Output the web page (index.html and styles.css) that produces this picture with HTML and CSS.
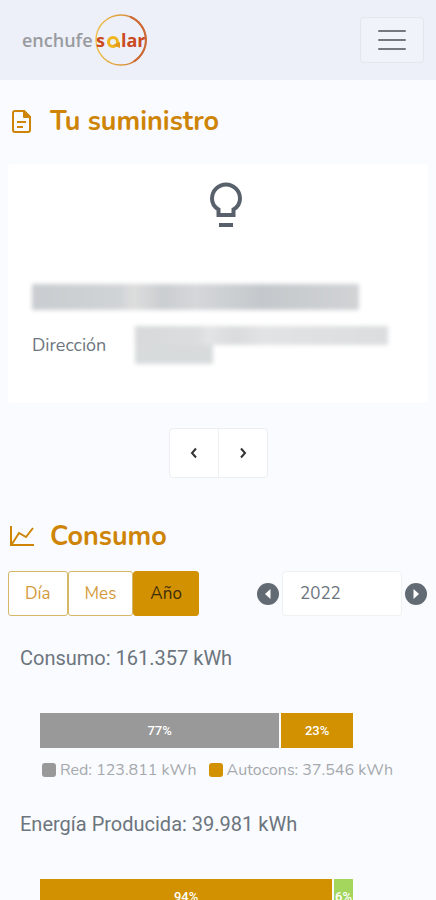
FILE: index.html
```
<!DOCTYPE html>
<html lang="es">
<head>
  <meta charset="UTF-8" />
  <meta name="viewport" content="width=device-width, initial-scale=1.0"/>
  <title>Enchufe Solar</title>
  <link rel="stylesheet" href="styles.css">
</head>
<body>

<!-- Navbar -->
<nav class="navbar">
  <a class="logo" href="#" aria-label="enchufesolar">
    <svg width="128" height="56" viewBox="0 0 128 56">
      <defs>
        <linearGradient id="ring" x1="0" y1="0" x2="1" y2="0">
          <stop offset="0" stop-color="#efc04c"/>
          <stop offset="0.55" stop-color="#dc9a3c"/>
          <stop offset="1" stop-color="#c94b22"/>
        </linearGradient>
      </defs>
      <circle cx="99" cy="28" r="25" fill="none" stroke="url(#ring)" stroke-width="1.4"/>
      <path d="M108 4.800A25 25 0 0 1 112 49.300" fill="none" stroke="#cc6a35" stroke-width="2"/>
      <text class="logo-grey" x="0" y="35">enchufe</text>
      <text class="logo-red" x="74" y="35">s</text>
      <circle cx="91" cy="30" r="4.500" fill="none" stroke="#f0b51c" stroke-width="3"/>
      <path d="M91 33l7 3v-6z" fill="#e39a1b"/>
      <text class="logo-red" x="99" y="35">lar</text>
    </svg>
  </a>
  <button class="menu-btn" type="button" aria-label="Menú">
    <svg width="30" height="24" viewBox="0 0 30 24" fill="none" stroke="#74797d" stroke-width="2" stroke-linecap="round">
      <path d="M2 3h26M2 12h26M2 21h26"/>
    </svg>
  </button>
</nav>

<main class="container">
  <!-- Suministro -->
  <h2 class="title">
    <svg class="title-icon" viewBox="0 0 28 28" fill="none" stroke="currentColor" stroke-width="2" stroke-linejoin="round">
      <path d="M7 3h9l6 6v13a2 2 0 0 1-2 2H7a2 2 0 0 1-2-2V5a2 2 0 0 1 2-2z"/>
      <path d="M16 3v6h6z" fill="currentColor"/>
      <path d="M9 14h9M9 19h6"/>
    </svg>
    Tu suministro
  </h2>

  <section class="card">
    <svg class="bulb" width="56" height="56" viewBox="0 0 56 56" fill="none" stroke="#58616b" stroke-width="4">
      <path d="M20.500 38v-5.500C15.500 29.500 14 25.500 14 21.500a14 14 0 0 1 28 0c0 4-1.500 8-6.500 11V38z"/>
      <path d="M21 48h14"/>
    </svg>
    <div class="hidden-name"></div>
    <div class="address">
      <span class="address-label">Dirección</span>
      <div class="address-value">
        <div class="hidden-line"></div>
        <div class="hidden-line short"></div>
      </div>
    </div>
  </section>

  <div class="pager">
    <button type="button" aria-label="Anterior">
      <svg width="10" height="12" viewBox="0 0 10 12" fill="none" stroke="#333" stroke-width="2"><path d="M7 1.500L3 6l4 4.500"/></svg>
    </button>
    <button type="button" aria-label="Siguiente">
      <svg width="10" height="12" viewBox="0 0 10 12" fill="none" stroke="#333" stroke-width="2"><path d="M3 1.500L7 6l-4 4.500"/></svg>
    </button>
  </div>

  <!-- Consumo -->
  <h2 class="title">
    <svg class="title-icon" viewBox="0 0 28 28" fill="none" stroke="currentColor" stroke-width="2">
      <path d="M3 3v19h23"/>
      <path d="M4 21l7-11 7 4 7-9"/>
    </svg>
    Consumo
  </h2>

  <div class="controls">
    <div class="periods">
      <button type="button">Día</button>
      <button type="button">Mes</button>
      <button type="button" class="active">Año</button>
    </div>
    <div class="year">
      <button type="button" aria-label="Año anterior">
        <svg width="24" height="24" viewBox="0 0 24 24"><circle cx="12" cy="12" r="11" fill="#626b73"/><path d="M14.500 7v10L9 12z" fill="#fff"/></svg>
      </button>
      <input type="text" value="2022" aria-label="Año">
      <button type="button" aria-label="Año siguiente">
        <svg width="24" height="24" viewBox="0 0 24 24"><circle cx="12" cy="12" r="11" fill="#626b73"/><path d="M9.500 7v10l5.500-5z" fill="#fff"/></svg>
      </button>
    </div>
  </div>

  <section class="chart">
    <h3>Consumo: 161.357 kWh</h3>
    <div class="bar">
      <div class="grey" style="width: 77%">77%</div>
      <div class="orange" style="width: 23%">23%</div>
    </div>
    <div class="legend">
      <span><i class="grey"></i>Red: 123.811 kWh</span>
      <span><i class="orange"></i>Autocons: 37.546 kWh</span>
    </div>
  </section>

  <section class="chart">
    <h3>Energía Producida: 39.981 kWh</h3>
    <div class="bar">
      <div class="orange" style="width: 94%">94%</div>
      <div class="green" style="width: 6%">6%</div>
    </div>
  </section>
</main>

</body>
</html>
```

FILE: styles.css
```
* {
  margin: 0;
  padding: 0;
  box-sizing: border-box;
}

body {
  background-color: #fafbff;
  color: #6c757d;
  font-family: Nunito, Lato, sans-serif;
  font-size: 17px;
}

button,
input {
  font: inherit;
  color: inherit;
}

button {
  cursor: pointer;
}

svg {
  display: block;
}

/* Navbar */
.navbar {
  display: flex;
  justify-content: space-between;
  align-items: center;
  height: 80px;
  padding: 0 12px 0 22px;
  background-color: #edf0f8;
}

.logo-grey,
.logo-red {
  font-family: "Open Sans", sans-serif;
  font-size: 18px;
  font-weight: 700;
  fill: #999b9f;
}

.logo-grey {
  font-weight: 600;
}

.logo-red {
  fill: #cb4a20;
}

.menu-btn {
  padding: 10px 16px;
  background: #f0f3f9;
  border: 1px solid #e3e6eb;
  border-radius: 4px;
}

.container {
  padding: 25px 8px;
}

.title {
  display: flex;
  align-items: center;
  gap: 14px;
  color: #ce8507;
  font-size: 27px;
  line-height: 34px;
  font-weight: 700;
}

.title-icon {
  width: 28px;
  height: 28px;
}

/* Card */
.card {
  margin: 25px 0;
  padding: 13px 24px 39px;
  background: #fff;
  border-radius: 4px;
}

.bulb {
  margin: 0 auto 51px;
  position: relative;
  left: 8px;
}

.hidden-name {
  width: 88%;
  height: 26px;
  background: linear-gradient(90deg, #c9ccd0, #d1d4d6 27%, #ddd 31%, #cbced1 40%, #d5d7d9 50%, #c4c8cc 70%, #d1d3d5);
  filter: blur(2px);
}

.address {
  display: flex;
  align-items: center;
  gap: 29px;
  margin-top: 16px;
}

.address-label {
  font-size: 18px;
}

.address-value {
  flex: 1;
  filter: blur(2px);
}

.hidden-line {
  width: 94%;
  height: 19px;
  background: linear-gradient(90deg, #d7d9da, #dbddde 25%, #e3e4e5 29%, #d9dbdc 40%, #e2e3e4 50%, #dbddde);
}

.hidden-line.short {
  width: 29%;
  background: #d8dbdc;
}

/* Pager */
.pager {
  display: flex;
  justify-content: center;
  margin-bottom: 42px;
}

.pager button {
  display: grid;
  place-items: center;
  width: 50px;
  height: 50px;
  background: #fff;
  border: 1px solid #eceef0;
  border-radius: 4px 0 0 4px;
}

.pager button + button {
  margin-left: -1px;
  border-radius: 0 4px 4px 0;
}

/* Period and year */
.controls {
  display: flex;
  justify-content: space-between;
  margin-top: 17px;
}

.periods,
.year {
  display: flex;
  align-items: center;
}

.periods button {
  height: 45px;
  padding: 0 16px;
  color: #d39a3c;
  background: #fff;
  border: 1px solid #d6b667;
  border-radius: 3px;
}

.periods .active {
  color: #3c2b0b;
  background: #d29100;
  border-color: #d29100;
}

.year {
  gap: 2px;
}

.year button {
  background: none;
  border: none;
}

.year input {
  width: 120px;
  height: 45px;
  padding: 0 17px;
  background: #fff;
  border: 1px solid #eff1f3;
  border-radius: 4px;
}

/* Charts */
.chart {
  padding: 0 12px;
  margin-top: 28px;
}

.chart h3 {
  font-family: Roboto, sans-serif;
  font-size: 20px;
  line-height: 28px;
  font-weight: 400;
}

.bar {
  display: flex;
  gap: 2px;
  width: 79%;
  margin: 41px 0 0 20px;
}

.bar div {
  height: 35px;
  line-height: 35px;
  color: #fff;
  font-family: Roboto, sans-serif;
  font-size: 13px;
  font-weight: 500;
  text-align: center;
}

.grey {
  background: #999;
}

.orange {
  background: #d29100;
}

.green {
  background: #a4d65e;
}

.legend {
  display: flex;
  gap: 12px;
  margin: 10px 0 0 22px;
  color: #a5a9ad;
  font-size: 16px;
  line-height: 24px;
  white-space: nowrap;
}

.legend span {
  display: flex;
  align-items: center;
  gap: 4px;
}

.legend i {
  width: 14px;
  height: 14px;
  border-radius: 3px;
}
```
